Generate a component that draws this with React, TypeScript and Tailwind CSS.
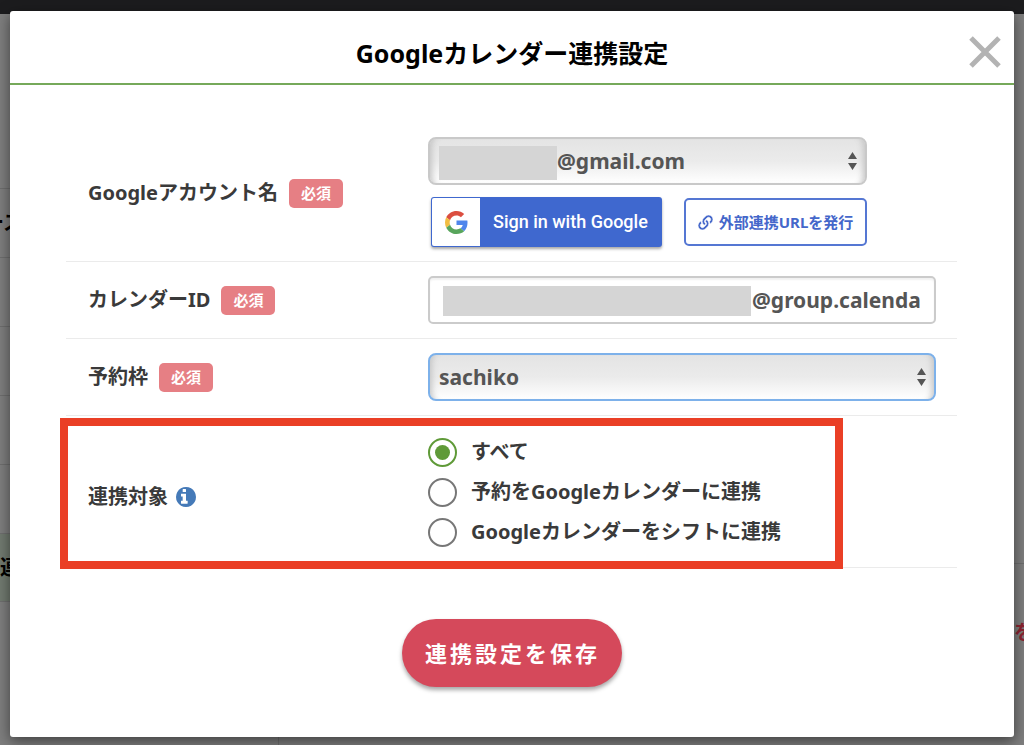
import { useState } from "react";
import type { ReactNode } from "react";
import { FaLink } from "react-icons/fa";

function RequiredBadge() {
  return (
    <span className="flex h-[29px] items-center rounded-[5px] bg-[#e67f84] px-3 text-[15px] leading-none text-white">
      必須
    </span>
  );
}

function InfoIcon() {
  return (
    <svg className="-ml-[3px] size-5 fill-[#457ab8]" viewBox="128 128 1536 1536" aria-hidden="true">
      <path d="M1024 1376v-160q0-14-9-23t-23-9h-96v-512q0-14-9-23t-23-9h-320q-14 0-23 9t-9 23v160q0 14 9 23t23 9h96v320h-96q-14 0-23 9t-9 23v160q0 14 9 23t23 9h448q14 0 23-9t9-23zM896 480v-160q0-14-9-23t-23-9h-192q-14 0-23 9t-9 23v160q0 14 9 23t23 9h192q14 0 23-9t9-23zM1664 896q0 209-103 385.5t-279.5 279.5-385.5 103-385.5-103-279.5-279.5-103-385.5 103-385.5 279.5-279.5 385.5-103 385.5 103 279.5 279.5 103 385.5z" />
    </svg>
  );
}

function Row({
  label,
  htmlFor,
  extra,
  className,
  labelClassName = "",
  children,
}: {
  label: string;
  htmlFor: string;
  extra: ReactNode;
  className: string;
  labelClassName?: string;
  children: ReactNode;
}) {
  return (
    <div
      className={`relative grid grid-cols-[340px_minmax(0,1fr)] items-center border-b border-[#ebebeb] pr-[21px] pl-[22px] ${className}`}
    >
      <div className={`flex items-center gap-[11px] ${labelClassName}`}>
        <label id={`${htmlFor}-label`} htmlFor={htmlFor}>
          {label}
        </label>
        {extra}
      </div>
      {children}
    </div>
  );
}

function SelectArrows() {
  return (
    <svg
      className="pointer-events-none absolute top-[15px] right-[10px] h-[18px] w-[9px] fill-[#555]"
      viewBox="0 0 9 18"
      aria-hidden="true"
    >
      <path d="M4.5 0 9 7H0zM4.5 18 0 11h9z" />
    </svg>
  );
}

const selectBase =
  "block h-12 w-full appearance-none rounded-[8px] border-2 bg-linear-to-b from-[#e4e4e4] via-[#ebebeb] to-white text-[21px] font-bold text-[#555] outline-none shadow-[inset_8px_0_6px_-6px_#c4c4c4,inset_-8px_0_6px_-6px_#c4c4c4]";

function GoogleLogo() {
  return (
    <svg className="size-[23px]" viewBox="0 0 48 48" aria-hidden="true">
      <path
        fill="#DB4E40"
        d="M24 9.5c3.54 0 6.71 1.22 9.21 3.6l6.85-6.85C35.9 2.38 30.47 0 24 0 14.62 0 6.51 5.38 2.56 13.22l7.98 6.19C12.43 13.72 17.74 9.5 24 9.5z"
      />
      <path
        fill="#4F86EC"
        d="M46.98 24.55c0-1.57-.15-3.09-.38-4.55H24v9.02h12.94c-.58 2.96-2.26 5.48-4.78 7.18l7.73 6c4.51-4.18 7.09-10.36 7.09-17.65z"
      />
      <path
        fill="#F2BD42"
        d="M10.53 28.59c-.48-1.45-.76-2.99-.76-4.59s.27-3.14.76-4.59l-7.98-6.19C.92 16.46 0 20.12 0 24c0 3.88.92 7.54 2.56 10.78l7.97-6.19z"
      />
      <path
        fill="#58A55C"
        d="M24 48c6.48 0 11.93-2.13 15.89-5.81l-7.73-6c-2.15 1.45-4.92 2.3-8.16 2.3-6.26 0-11.57-4.22-13.47-9.91l-7.98 6.19C6.51 42.62 14.62 48 24 48z"
      />
    </svg>
  );
}

const navItems = ["ース", "", "", "", "", "連"];

function Backdrop() {
  return (
    <div
      className="absolute inset-0 flex flex-col overflow-hidden bg-[#7e7e7e] text-[20px]"
      aria-hidden="true"
    >
      <div className="h-[14px] shrink-0 bg-[#1c1c1e]" />
      <div className="flex grow">
        <div className="w-[279px] border-r border-[#6e6e6e] pt-[174px]">
          {navItems.map((item, i) => (
            <div
              key={i}
              className={`flex h-[69px] items-center border-t border-[#6e6e6e] ${
                i === 5 ? "border-b bg-[#717a70]" : ""
              }`}
            >
              <span className={i === 0 ? "-ml-4 text-black" : "text-black"}>{item}</span>
            </div>
          ))}
        </div>
        <div className="flex grow flex-col items-end pt-[549px]">
          <div className="w-full border-t border-[#6e6e6e] pt-[54px] text-right text-[#8b2331]">
            <span className="-mr-[10px]">を</span>
          </div>
        </div>
      </div>
    </div>
  );
}

const targets = ["すべて", "予約をGoogleカレンダーに連携", "Googleカレンダーをシフトに連携"];

export default function App() {
  const [target, setTarget] = useState(0);

  return (
    <div className="relative min-h-screen px-[10px] pt-[11px] pb-2 font-['Noto_Sans','Noto_Sans_CJK_JP',sans-serif] font-bold">
      <Backdrop />
      <div
        role="dialog"
        aria-labelledby="dialog-title"
        className="relative rounded-[3px] bg-white pb-[50px] shadow-[0_4px_14px_rgba(0,0,0,0.5)]"
      >
        <header className="relative flex h-[74px] items-center justify-center border-b-2 border-[#76a95a] pt-3">
          <h1 id="dialog-title" className="text-[25px] leading-8 text-black">
            Googleカレンダー連携設定
          </h1>
          <button
            type="button"
            aria-label="閉じる"
            className="absolute top-[25px] right-[13px] text-[#b3b3b3]"
          >
            <svg className="size-8" viewBox="0 0 32 32" stroke="currentColor" strokeWidth="5" aria-hidden="true">
              <path d="M2 2 30 30M30 2 2 30" />
            </svg>
          </button>
        </header>

        <form className="pt-[52px]" onSubmit={(e) => e.preventDefault()}>
          <div className="mr-[57px] ml-[56px] text-[20px] leading-[30px] text-[#3a3a3a]">
            <Row
              label="Googleアカウント名"
              htmlFor="account"
              extra={<RequiredBadge />}
              className="pb-[14px]"
              labelClassName="pt-[2px]"
            >
              <div className="flex flex-col gap-3">
                <div className="relative max-w-[439px]">
                  <select
                    id="account"
                    className={`${selectBase} border-[#c9c9c9] pl-[127px]`}
                  >
                    <option>@gmail.com</option>
                  </select>
                  <span className="pointer-events-none absolute top-[9px] left-[11px] h-[34px] w-[118px] bg-[#d5d5d5]" />
                  <SelectArrows />
                </div>
                <div className="flex max-w-[439px] items-center justify-between pl-[3px]">
                  <button
                    type="button"
                    className="flex h-[50px] items-center rounded-[3px] bg-[#3f68cf] p-px pr-[14px] font-['Roboto',sans-serif] text-[18px] font-medium text-white shadow-[0_2px_3px_rgba(0,0,0,0.35)]"
                  >
                    <span className="mr-[13px] flex h-full w-12 items-center justify-center rounded-l-[2px] bg-white">
                      <GoogleLogo />
                    </span>
                    Sign in with Google
                  </button>
                  <button
                    type="button"
                    className="flex h-12 min-w-[183px] items-center justify-center gap-[6px] rounded-[5px] border-2 border-[#5577d3] text-[15px] text-[#4467ca]"
                  >
                    <FaLink className="size-[15px] stroke-white [stroke-width:22]" aria-hidden="true" />
                    外部連携URLを発行
                  </button>
                </div>
              </div>
            </Row>

            <Row label="カレンダーID" htmlFor="calendar" extra={<RequiredBadge />} className="py-[14px]">
              <div className="relative">
                <input
                  id="calendar"
                  type="text"
                  defaultValue="@group.calenda"
                  className="block h-12 w-full rounded-[5px] border-2 border-[#cbcbcb] bg-white pl-[322px] text-[21px] text-[#555] shadow-[inset_0_2px_2px_rgba(0,0,0,0.06)] outline-none"
                />
                <span className="pointer-events-none absolute top-[10px] left-[15px] h-[30px] w-[308px] bg-[#d5d5d5]" />
              </div>
            </Row>

            <Row label="予約枠" htmlFor="slot" extra={<RequiredBadge />} className="py-[14px]">
              <div className="relative">
                <select id="slot" className={`${selectBase} border-[#7db1ea] pl-[9px]`}>
                  <option>sachiko</option>
                </select>
                <SelectArrows />
              </div>
            </Row>

            <Row
              label="連携対象"
              htmlFor="target-0"
              extra={<InfoIcon />}
              className="pt-4 pb-[15px]"
              labelClassName="pt-[10px]"
            >
              <div role="radiogroup" aria-labelledby="target-0-label">
                {targets.map((text, i) => (
                  <div key={text} className="flex h-10 items-center gap-[14px]">
                    <input
                      id={`target-${i}`}
                      type="radio"
                      name="target"
                      checked={target === i}
                      onChange={() => setTarget(i)}
                      className="flex size-[29px] appearance-none items-center justify-center rounded-full border-2 border-[#777] bg-white checked:border-[#5f9a38] checked:before:size-[15px] checked:before:rounded-full checked:before:bg-[#5f9a38] checked:before:content-['']"
                    />
                    <label htmlFor={`target-${i}`}>{text}</label>
                  </div>
                ))}
              </div>
              <div className="pointer-events-none absolute top-[2px] right-[114px] -bottom-[2px] -left-[6px] border-8 border-[#ea3f26]" />
            </Row>
          </div>

          <div className="mt-[51px] flex justify-center">
            <button
              type="submit"
              className="h-[68px] rounded-full bg-[#d5495b] pr-[22px] pl-[23px] text-[22px] tracking-[3px] text-white shadow-[0_3px_4px_rgba(0,0,0,0.35)]"
            >
              連携設定を保存
            </button>
          </div>
        </form>
      </div>
    </div>
  );
}
